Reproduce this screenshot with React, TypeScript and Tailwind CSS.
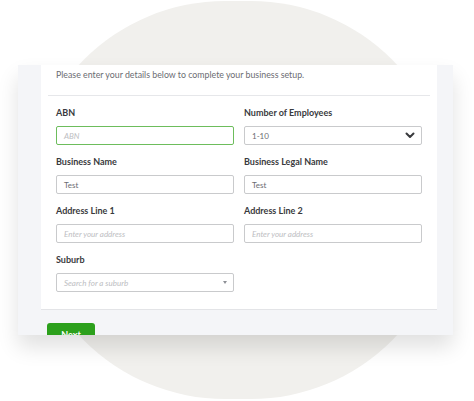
const font = { fontFamily: 'Lato, "Noto Sans", sans-serif' }

function Label({ children }: { children: string }) {
  return <div className="h-[12px] text-[9px] leading-[12px] font-bold text-[#393a3d] mb-[7px]">{children}</div>
}

function TextInput({ value, placeholder, active }: { value?: string; placeholder?: string; active?: boolean }) {
  return (
    <div
      className={`h-[19px] rounded-[2px] border bg-white px-[7px] flex items-center text-[8px] ${
        active ? 'border-[#6dbd5c]' : 'border-[#c9cacc]'
      }`}
    >
      {value ? (
        <span className="text-[#6b6c72]">{value}</span>
      ) : (
        <span className="italic text-[#bdbec2]">{placeholder}</span>
      )}
    </div>
  )
}

export default function App() {
  return (
    <div className="relative w-[474px] h-[401px] overflow-hidden bg-white" style={font}>
      <div className="absolute left-[26px] top-[1px] w-[424px] h-[398px] rounded-full bg-[#f1f0ed]" />

      <div className="relative ml-[18px] mt-[65px] w-[435px] h-[270px] bg-[#f4f5f8] overflow-hidden shadow-[0_12px_20px_rgba(0,0,0,0.12)]">
        <div className="ml-[23px] w-[396px] h-[245px] bg-white border-b border-[#e3e4e7]">
          <div className="pt-[4px] pl-[15px] h-[16px] text-[8.8px] leading-[12px] text-[#6b6c72]">
            Please enter your details below to complete your business setup.
          </div>
          <div className="mt-[14px] mx-[7px] h-px bg-[#e6e7ea]" />

          <div className="mt-[11px] px-[15px] grid grid-cols-2 gap-x-[10px] gap-y-[11px]">
            <div>
              <Label>ABN</Label>
              <TextInput placeholder="ABN" active />
            </div>
            <div>
              <Label>Number of Employees</Label>
              <div className="h-[19px] rounded-[2px] border border-[#c9cacc] bg-white pl-[7px] pr-[6px] flex items-center justify-between text-[8px] text-[#6b6c72]">
                <span>1-10</span>
                <svg width="10" height="7" viewBox="0 0 10 7">
                  <polyline points="1.5,1.5 5,5 8.5,1.5" fill="none" stroke="#393a3d" strokeWidth="2" strokeLinecap="round" strokeLinejoin="round" />
                </svg>
              </div>
            </div>
            <div>
              <Label>Business Name</Label>
              <TextInput value="Test" />
            </div>
            <div>
              <Label>Business Legal Name</Label>
              <TextInput value="Test" />
            </div>
            <div>
              <Label>Address Line 1</Label>
              <TextInput placeholder="Enter your address" />
            </div>
            <div>
              <Label>Address Line 2</Label>
              <TextInput placeholder="Enter your address" />
            </div>
            <div>
              <Label>Suburb</Label>
              <div className="h-[19px] rounded-[2px] border border-[#c9cacc] bg-white pl-[7px] pr-[6px] flex items-center justify-between text-[8px]">
                <span className="italic text-[#bdbec2]">Search for a suburb</span>
                <svg width="4" height="3" viewBox="0 0 4 3">
                  <polygon points="0,0 4,0 2,3" fill="#8d9096" />
                </svg>
              </div>
            </div>
          </div>
        </div>

        <button className="mt-[13px] ml-[29px] w-[48px] h-[24px] rounded-[3px] bg-[#2ca01c] text-white text-[9px] font-bold">
          Next
        </button>
      </div>
    </div>
  )
}
